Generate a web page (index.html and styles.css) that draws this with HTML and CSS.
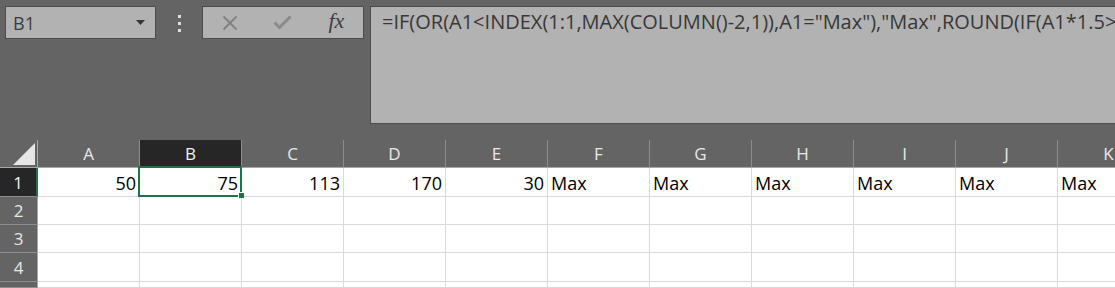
FILE: index.html
```html
<!DOCTYPE html>
<html lang="en">
<head>
    <meta charset="UTF-8">
    <meta name="viewport" content="width=device-width, initial-scale=1.0">
    <title>Book1 - Excel</title>
    <link rel="stylesheet" href="styles.css">
</head>
<body>
    <div class="ribbon">
        <div class="namebox">
            <span>B1</span>
            <svg class="caret" width="9" height="5" viewBox="0 0 9 5"><polygon points="0,0 9,0 4.5,5" fill="#353535"/></svg>
        </div>
        <div class="grip"><i></i><i></i><i></i></div>
        <div class="fxbtns">
            <div class="slot">
                <svg width="16" height="16" viewBox="0 0 16 16"><path d="M1.5 1.5 L14.5 14.5 M14.5 1.5 L1.5 14.5" stroke="#808080" stroke-width="1.8" fill="none"/></svg>
            </div>
            <div class="slot">
                <svg width="19" height="15" viewBox="0 0 19 15"><path d="M1.5 7.5 L6.5 12.5 L17.5 1.5" stroke="#8a8a8a" stroke-width="3" fill="none"/></svg>
            </div>
            <div class="slot"><span class="fx">fx</span></div>
        </div>
        <div class="formula">=IF(OR(A1&lt;INDEX(1:1,MAX(COLUMN()-2,1)),A1="Max"),"Max",ROUND(IF(A1*1.5&gt;</div>
    </div>

    <div class="sheet">
        <div class="hd corner">
            <svg width="37" height="27" viewBox="0 0 37 27"><polygon points="35,3 35,25 13,25" fill="#e6e6e6"/></svg>
        </div>
        <div class="hd col">A</div>
        <div class="hd col active">B</div>
        <div class="hd col">C</div>
        <div class="hd col">D</div>
        <div class="hd col">E</div>
        <div class="hd col">F</div>
        <div class="hd col">G</div>
        <div class="hd col">H</div>
        <div class="hd col">I</div>
        <div class="hd col">J</div>
        <div class="hd col">K</div>

        <div class="hd row active">1</div>
        <div class="cell num">50</div>
        <div class="cell num sel">75</div>
        <div class="cell num">113</div>
        <div class="cell num">170</div>
        <div class="cell num">30</div>
        <div class="cell">Max</div>
        <div class="cell">Max</div>
        <div class="cell">Max</div>
        <div class="cell">Max</div>
        <div class="cell">Max</div>
        <div class="cell">Max</div>

        <div class="hd row">2</div>
        <div class="cell"></div><div class="cell"></div><div class="cell"></div><div class="cell"></div><div class="cell"></div><div class="cell"></div><div class="cell"></div><div class="cell"></div><div class="cell"></div><div class="cell"></div><div class="cell"></div>

        <div class="hd row">3</div>
        <div class="cell"></div><div class="cell"></div><div class="cell"></div><div class="cell"></div><div class="cell"></div><div class="cell"></div><div class="cell"></div><div class="cell"></div><div class="cell"></div><div class="cell"></div><div class="cell"></div>

        <div class="hd row">4</div>
        <div class="cell"></div><div class="cell"></div><div class="cell"></div><div class="cell"></div><div class="cell"></div><div class="cell"></div><div class="cell"></div><div class="cell"></div><div class="cell"></div><div class="cell"></div><div class="cell"></div>

        <div class="hd row"></div>
        <div class="cell"></div><div class="cell"></div><div class="cell"></div><div class="cell"></div><div class="cell"></div><div class="cell"></div><div class="cell"></div><div class="cell"></div><div class="cell"></div><div class="cell"></div><div class="cell"></div>
    </div>
</body>
</html>
```

FILE: styles.css
```css
body {
    margin: 0;
    background: #646464;
    font-family: 'Open Sans', 'Noto Sans', sans-serif;
    overflow: hidden;
    width: 1115px;
    height: 288px;
}

/* formula bar area */
.ribbon {
    display: flex;
    align-items: flex-start;
    height: 140px;
    padding: 6px 0 0 5px;
    box-sizing: border-box;
}

.namebox {
    width: 151px;
    height: 33px;
    box-sizing: border-box;
    border: 1px solid #4c4c4c;
    background: #b2b2b2;
    display: flex;
    align-items: center;
    justify-content: space-between;
    padding: 0 10px 0 7px;
    font-size: 18px;
    color: #3c3c3c;
}

.grip {
    width: 46px;
    display: flex;
    flex-direction: column;
    align-items: center;
    gap: 4px;
    padding-top: 9px;
}

.grip i {
    display: block;
    width: 3px;
    height: 3px;
    background: #dedede;
}

.fxbtns {
    width: 162px;
    height: 33px;
    box-sizing: border-box;
    border: 1px solid #4c4c4c;
    background: #b2b2b2;
    display: flex;
}

.fxbtns .slot {
    flex: 1;
    display: flex;
    align-items: center;
    justify-content: center;
}

.fx {
    font-family: 'Liberation Serif', serif;
    font-style: italic;
    font-size: 22px;
    color: #3e3e3e;
    line-height: 1;
    margin-top: -3px;
}

.formula {
    flex: 1;
    min-width: 0;
    margin-left: 6px;
    height: 118px;
    box-sizing: border-box;
    border: 1px solid #4c4c4c;
    border-right: none;
    background: #b2b2b2;
    padding: 1px 0 0 11px;
    font-size: 20px;
    line-height: 27px;
    color: #383838;
    white-space: nowrap;
    overflow: hidden;
}

/* grid */
.sheet {
    display: grid;
    grid-template-columns: 38px repeat(11, 102px);
    grid-template-rows: 28px 29px 28px 28px 29px 6px;
    overflow: hidden;
}

.hd {
    background: #646464;
    color: #e8e8e8;
    font-size: 17px;
    display: flex;
    align-items: center;
    justify-content: center;
    box-sizing: border-box;
    border-right: 1px solid #8d8d8d;
    border-bottom: 1px solid #a8a8a8;
}

.hd.corner {
    border-right-color: #a8a8a8;
    display: block;
}

.hd.corner svg {
    display: block;
}

.hd.row {
    border-right-color: #a8a8a8;
    border-bottom-color: #8d8d8d;
}

.hd.active {
    background: #262626;
    color: #f2f2f2;
}

.hd.row.active {
    border-right: 2px solid #217346;
}

.cell {
    background: #fff;
    box-sizing: border-box;
    border-right: 1px solid #dadada;
    border-bottom: 1px solid #dadada;
    font-size: 18px;
    color: #000;
    display: flex;
    align-items: center;
    padding: 1px 3px 0 3px;
    white-space: nowrap;
}

.cell.num {
    justify-content: flex-end;
}

.cell.sel {
    position: relative;
}

.cell.sel::after {
    content: '';
    position: absolute;
    top: -2px;
    left: -2px;
    right: -1px;
    bottom: -1px;
    border: 2px solid #217346;
    z-index: 2;
}

.cell.sel::before {
    content: '';
    position: absolute;
    right: -3px;
    bottom: -2px;
    width: 5px;
    height: 5px;
    background: #217346;
    border: 1px solid #fff;
    border-right: none;
    border-bottom: none;
    z-index: 3;
}
```
